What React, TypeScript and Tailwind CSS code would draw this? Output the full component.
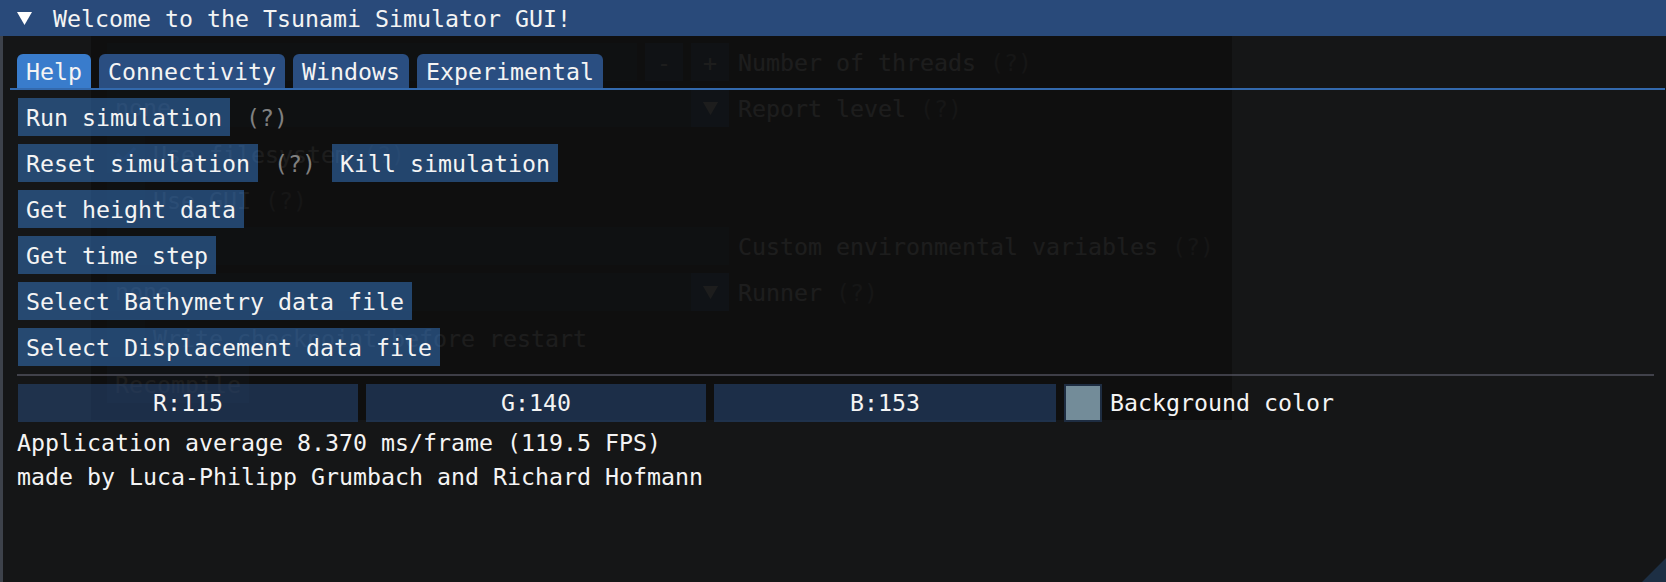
import React from 'react';

// ImGui dark style, composited the same way: app background -> back window -> front window
const frameRow = 'h-[38px] flex items-center';
const btn = 'h-[38px] px-[8px] pt-[2px] flex items-center bg-[rgba(66,150,250,0.4)] whitespace-pre';
const frame = 'h-[38px] bg-[rgba(41,74,122,0.54)]';

const Help: React.FC = () => <span className="text-[#808080] whitespace-pre">(?)</span>;

const Triangle: React.FC<{ className?: string }> = ({ className }) => (
  <svg width="15" height="13" viewBox="0 0 15 13" className={className}>
    <polygon points="0,0 15,0 7.5,13" fill="currentColor" />
  </svg>
);

/** Window sitting behind the main one, seen through its 94% background. */
const BackWindow: React.FC = () => (
  <div className="absolute left-[91px] top-0 w-[1141px] h-[420px] bg-[rgba(15,15,15,0.94)] pt-[43px] pl-[16px] flex flex-col gap-[8px] text-white">
    <div className={`${frameRow} gap-[8px]`}>
      <div className={`${frame} w-[530px]`} />
      <div className={`${btn} w-[38px] justify-center px-0`}>-</div>
      <div className={`${btn} w-[38px] justify-center px-0`}>+</div>
      <span className="ml-[1px] pt-[2px] whitespace-pre">Number of threads <Help /></span>
    </div>
    <div className={`${frameRow} gap-[8px]`}>
      <div className={`${frame} w-[622px] flex items-center pl-[8px] justify-between`}>
        <span>none</span>
        <div className="w-[38px] h-[38px] bg-[rgba(66,150,250,0.4)] flex items-center justify-center">
          <Triangle />
        </div>
      </div>
      <span className="ml-[1px] pt-[2px] whitespace-pre">Report level <Help /></span>
    </div>
    <div className={`${frameRow} gap-[8px]`}>
      <div className={`${frame} w-[38px] flex items-center justify-center`}>
        <svg width="22" height="18" viewBox="0 0 22 18">
          <polyline points="2,9 8,15 20,3" fill="none" stroke="#4296fa" strokeWidth="3" />
        </svg>
      </div>
      <span className="pt-[2px] whitespace-pre">Use filesystem <Help /></span>
    </div>
    <div className={`${frameRow} gap-[8px]`}>
      <div className={`${frame} w-[38px]`} />
      <span className="pt-[2px] whitespace-pre">Use GUI <Help /></span>
    </div>
    <div className={`${frameRow} gap-[8px]`}>
      <div className={`${frame} w-[622px]`} />
      <span className="ml-[1px] pt-[2px] whitespace-pre">Custom environmental variables <Help /></span>
    </div>
    <div className={`${frameRow} gap-[8px]`}>
      <div className={`${frame} w-[622px] flex items-center pl-[8px] justify-between`}>
        <span>none</span>
        <div className="w-[38px] h-[38px] bg-[rgba(66,150,250,0.4)] flex items-center justify-center">
          <Triangle />
        </div>
      </div>
      <span className="ml-[1px] pt-[2px] whitespace-pre">Runner <Help /></span>
    </div>
    <div className={`${frameRow} gap-[8px]`}>
      <div className={`${frame} w-[38px]`} />
      <span className="pt-[2px] whitespace-pre">Write checkpoint before restart</span>
    </div>
    <div className={frameRow}>
      <div className={btn}>Recompile</div>
    </div>
  </div>
);

const tabs = [
  { label: 'Help', active: true },
  { label: 'Connectivity', active: false },
  { label: 'Windows', active: false },
  { label: 'Experimental', active: false },
];

export default function App() {
  return (
    <div className="relative w-[1666px] h-[582px] overflow-hidden bg-[#738c99] font-['DejaVu_Sans_Mono','Liberation_Mono',monospace] text-[23.25px] leading-[26px] text-[#f4f4f4]">
      <BackWindow />

      <div className="absolute inset-0 flex flex-col">
        {/* title bar */}
        <div className="h-[36px] shrink-0 bg-[#294a7a] flex items-center pl-[17px]">
          <Triangle className="text-white" />
          <span className="ml-[21px] pt-[2px] whitespace-pre">Welcome to the Tsunami Simulator GUI!</span>
        </div>

        <div className="relative flex-1 flex flex-col bg-[rgba(15,15,15,0.94)] border-l-[3px] border-[rgba(110,120,140,0.45)]">
          {/* tab bar */}
          <div className="mt-[18px] ml-[7px] mr-[1px] border-b-[2px] border-[#3369ad] pl-[7px] flex gap-[8px]">
            {tabs.map((t) => (
              <div
                key={t.label}
                className={`h-[34px] px-[9px] pt-[2px] flex items-center rounded-t-[6px] ${
                  t.active ? 'bg-[rgba(66,150,250,0.8)]' : 'bg-[rgba(46,89,148,0.86)]'
                }`}
              >
                {t.label}
              </div>
            ))}
          </div>

          {/* buttons */}
          <div className="mt-[8px] pl-[15px] flex flex-col gap-[8px]">
            <div className="flex items-center gap-[16px]">
              <div className={btn}>Run simulation</div>
              <span className="pt-[2px]"><Help /></span>
            </div>
            <div className="flex items-center gap-[16px]">
              <div className={btn}>Reset simulation</div>
              <span className="pt-[2px]"><Help /></span>
              <div className={btn}>Kill simulation</div>
            </div>
            <div className="flex">
              <div className={btn}>Get height data</div>
            </div>
            <div className="flex">
              <div className={btn}>Get time step</div>
            </div>
            <div className="flex">
              <div className={btn}>Select Bathymetry data file</div>
            </div>
            <div className="flex">
              <div className={btn}>Select Displacement data file</div>
            </div>
          </div>

          <div className="mt-[8px] ml-[14px] mr-[12px] h-[2px] bg-[rgba(110,110,128,0.5)]" />

          {/* background colour editor */}
          <div className="mt-[8px] pl-[15px] flex items-center gap-[8px]">
            <div className={`${frame} w-[340px] flex items-center justify-center`}>R:115</div>
            <div className={`${frame} w-[340px] flex items-center justify-center`}>G:140</div>
            <div className={`${frame} w-[342px] flex items-center justify-center`}>B:153</div>
            <div className="w-[38px] h-[38px] bg-[#738c99] border-[2px] border-[#1e2d42]" />
            <span className="whitespace-pre">Background color</span>
          </div>

          <div className="mt-[8px] pl-[14px] flex flex-col gap-[8px]">
            <span className="whitespace-pre">Application average 8.370 ms/frame (119.5 FPS)</span>
            <span className="whitespace-pre">made by Luca-Philipp Grumbach and Richard Hofmann</span>
          </div>

          {/* resize grip */}
          <svg width="24" height="24" viewBox="0 0 24 24" className="absolute right-0 bottom-0">
            <polygon points="24,0 24,24 0,24" fill="rgba(66,150,250,0.2)" />
          </svg>
        </div>
      </div>
    </div>
  );
}
